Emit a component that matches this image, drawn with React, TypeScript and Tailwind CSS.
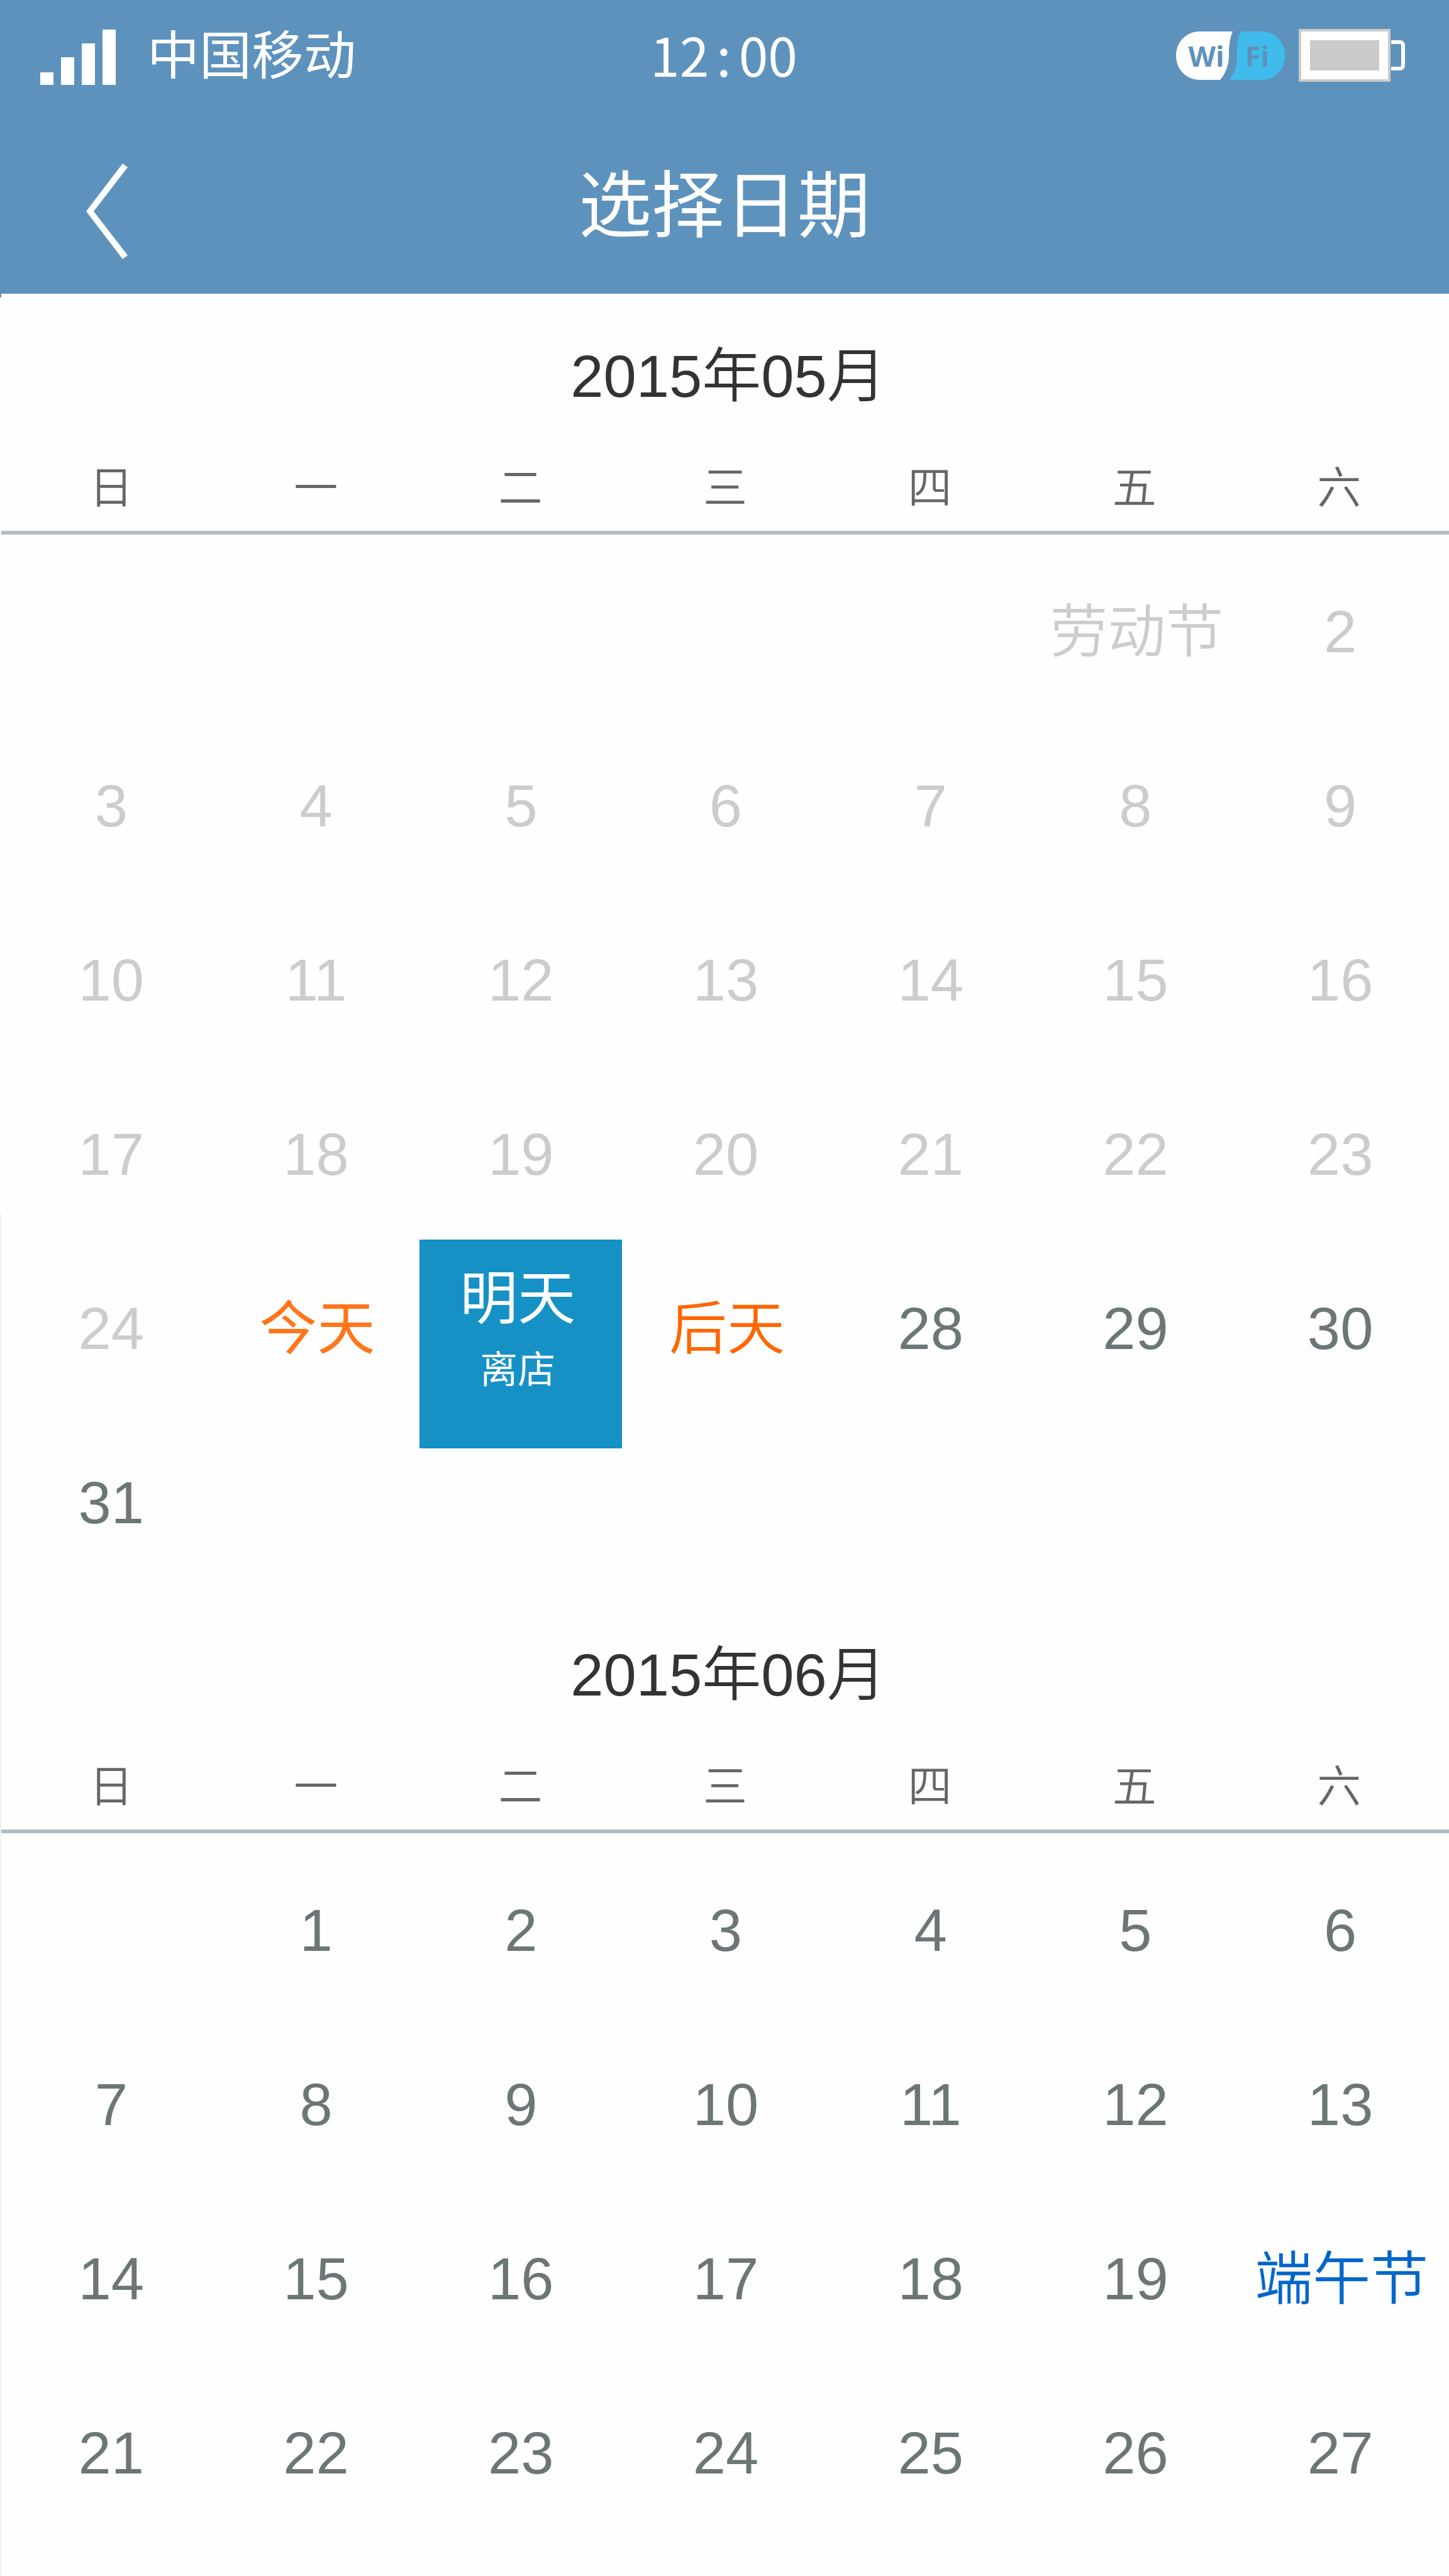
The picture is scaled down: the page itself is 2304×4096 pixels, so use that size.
import React from "react";

type DayKind = "past" | "open" | "today" | "soon" | "holiday" | "selected";

interface Day {
  label: string;
  kind: DayKind;
  note?: string;
}

const WEEKDAYS = ["日", "一", "二", "三", "四", "五", "六"];

const KIND_CLASS: Record<DayKind, string> = {
  past: "text-[#cccccc] font-[350]",
  open: "text-[#6c7676] font-[350]",
  today: "text-[#ff7519] font-normal",
  soon: "text-[#ff6600] font-[350]",
  holiday: "text-[#0066cc] font-[350]",
  selected: "text-white font-normal",
};

function range(from: number, to: number, kind: DayKind): Day[] {
  return Array.from({ length: to - from + 1 }, (_, i) => ({ label: String(from + i), kind }));
}

function toWeeks(leading: number, days: Day[]): (Day | null)[][] {
  const cells: (Day | null)[] = [...Array<null>(leading).fill(null), ...days];
  while (cells.length % 7) cells.push(null);
  const weeks: (Day | null)[][] = [];
  for (let i = 0; i < cells.length; i += 7) weeks.push(cells.slice(i, i + 7));
  return weeks;
}

const MAY = toWeeks(5, [
  { label: "劳动节", kind: "past" },
  ...range(2, 24, "past"),
  { label: "今天", kind: "today" },
  { label: "明天", kind: "selected", note: "离店" },
  { label: "后天", kind: "soon" },
  ...range(28, 31, "open"),
]);

const JUNE = toWeeks(1, [
  ...range(1, 19, "open"),
  { label: "端午节", kind: "holiday" },
  ...range(21, 27, "open"),
]);

function SignalBars() {
  return (
    <div className="mt-1.5 flex h-[88px] items-end gap-3" role="img" aria-label="信号">
      <span className="h-5 w-[21px] bg-white" />
      <span className="h-11 w-[21px] bg-white" />
      <span className="h-[66px] w-[21px] bg-white" />
      <span className="h-[88px] w-[21px] bg-white" />
    </div>
  );
}

function WifiBadge() {
  return (
    <svg viewBox="0 0 173 77" className="h-[77px] w-[173px]" role="img" aria-label="WiFi">
      <path d="M38 0H90C85 12 84 24 84 39C84 54 78 68 70 77H38C17 77 0 61 0 38.500C0 16 17 0 38 0Z" fill="#fff" />
      <path d="M103 0H136C157 0 173 16 173 38.500C173 61 157 77 136 77H84.500C93 67 97 53 97 44C96 24 98 11 103 0Z" fill="#40bcec" />
      <text x="48" y="56" textAnchor="middle" fontFamily="'Open Sans', 'Noto Sans', sans-serif" fontWeight="700" fontSize="45" fill="#5d92bc">
        Wi
      </text>
      <text x="129" y="56" textAnchor="middle" fontFamily="'Open Sans', 'Noto Sans', sans-serif" fontWeight="700" fontSize="45" fill="#5d92bc">
        Fi
      </text>
    </svg>
  );
}

function Battery() {
  return (
    <div className="flex items-center" role="img" aria-label="电量">
      <div className="h-[84px] w-[146px] border-4 border-[#cacaca] bg-white p-3.5">
        <div className="h-full w-full bg-[#cacaca]" />
      </div>
      <div className="ml-px h-12 w-[22px] rounded-r-lg border-6 border-l-0 border-white" />
    </div>
  );
}

function DayCell({ day }: { day: Day }) {
  if (day.kind === "selected") {
    return (
      <button
        type="button"
        aria-pressed="true"
        className={`absolute -top-[3px] right-0.5 left-0.5 z-10 flex h-[332px] flex-col items-center bg-[#1591c6] pt-9 pr-2.5 ${KIND_CLASS.selected}`}
      >
        <span className="text-[92px] leading-[116px]">{day.label}</span>
        <span className="text-[60px] leading-[112px]">{day.note}</span>
      </button>
    );
  }
  const numeric = /^\d+$/.test(day.label);
  return (
    <button
      type="button"
      disabled={day.kind === "past"}
      className={`flex h-full w-full items-center justify-center leading-[120px] whitespace-nowrap ${
        numeric ? "text-[94px]" : "pl-1 text-[92px]"
      } ${KIND_CLASS[day.kind]}`}
    >
      {day.label}
    </button>
  );
}

function Month({ title, weeks }: { title: string; weeks: (Day | null)[][] }) {
  return (
    <section className="pb-1">
      <h2 className="pt-18 pl-3 text-center text-[94px] leading-[120px] font-[350] text-[#333333]">{title}</h2>
      <table className="mt-12 block" aria-label={title}>
        <thead className="ml-0.5 block border-b-6 border-[#b1bdc0]">
          <tr className="grid grid-cols-7 px-3">
            {WEEKDAYS.map((name) => (
              <th key={name} scope="col" className="h-[137px] text-center text-[70px] leading-[140px] font-[350] text-[#666666]">
                {name}
              </th>
            ))}
          </tr>
        </thead>
        <tbody className="block pt-4">
          {weeks.map((week, w) => (
            <tr key={w} className="grid grid-cols-7 pr-2.5 pl-3.5">
              {week.map((day, d) => (
                <td key={d} className="relative h-[277px]">
                  {day && <DayCell day={day} />}
                </td>
              ))}
            </tr>
          ))}
        </tbody>
      </table>
    </section>
  );
}

export default function App() {
  return (
    <div
      lang="zh-CN"
      className="flex min-h-screen flex-col bg-[#fefefe] font-['Liberation_Sans','Noto_Sans_CJK_SC',sans-serif]"
    >
      <header className="bg-[#5d92bc] text-white">
        <div className="grid h-[176px] grid-cols-[1fr_auto_1fr] items-center pr-[70px] pl-16">
          <div className="flex items-center gap-[50px]">
            <SignalBars />
            <span className="mb-3 font-['Noto_Sans_CJK_SC',sans-serif] text-[83px] leading-[100px]">中国移动</span>
          </div>
          <time className="mb-1 ml-1 font-['Noto_Sans_CJK_SC',sans-serif] text-[84px] leading-[100px]">
            12<span className="mx-3">:</span>00
          </time>
          <div className="flex items-center justify-end gap-[22px]">
            <WifiBadge />
            <Battery />
          </div>
        </div>
        <div className="grid h-[291px] grid-cols-[1fr_auto_1fr] items-center px-[137px]">
          <button type="button" aria-label="返回" className="mt-7 w-fit">
            <svg viewBox="0 0 66 152" className="h-[152px] w-[66px]">
              <path d="M58 0L66 6L12 76L66 146L58 152L0 76Z" fill="#fff" />
            </svg>
          </button>
          <h1 className="mt-3 text-[116px] leading-[140px]">选择日期</h1>
        </div>
      </header>
      <main className="relative flex-1">
        <span className="absolute top-0 left-0 h-1.5 w-0.5 bg-[#5d92bc]" />
        <span className="absolute top-[1463px] bottom-0 left-0 w-0.5 bg-[#efefef]" />
        <Month title="2015年05月" weeks={MAY} />
        <Month title="2015年06月" weeks={JUNE} />
      </main>
    </div>
  );
}
